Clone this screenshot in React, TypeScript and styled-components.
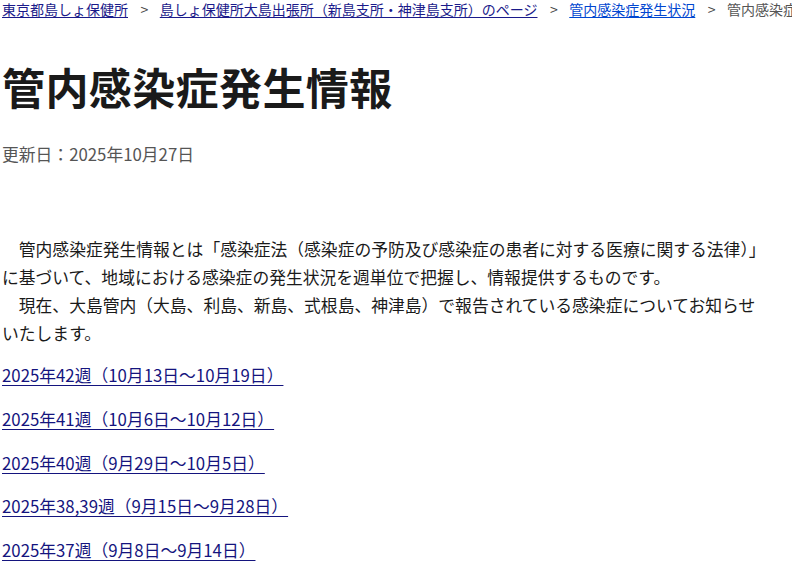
import * as React from 'react'
import styled, { createGlobalStyle } from 'styled-components'

const GlobalStyle = createGlobalStyle`
  html, body {
    margin: 0;
    padding: 0;
    background: #fff;
    overflow: hidden;
  }
  body {
    font-family: "Noto Sans CJK JP", "Noto Sans", sans-serif;
    color: #1a1a1a;
  }
`

const Page = styled.div`
  padding: 0 0 0 2px;
  width: 790px;
`

const Breadcrumb = styled.nav`
  display: flex;
  align-items: center;
  white-space: nowrap;
  font-size: 14px;
  line-height: 18px;
  height: 18px;
  color: #444;
`

const Crumb = styled.a<{ $current?: boolean }>`
  color: ${p => (p.$current ? '#0046d0' : '#1a1a8a')};
  text-decoration: underline;
  text-underline-offset: 2px;
`

const Sep = styled.span`
  display: inline-block;
  margin: 0 11.5px 0 12.5px;
  color: #444;
`

const Here = styled.span`
  color: #555;
`

const Title = styled.h1`
  margin: 37px 0 0 0;
  font-size: 43px;
  line-height: 62px;
  font-weight: 700;
  color: #1a1a1a;
  letter-spacing: 0.4px;
`

const Updated = styled.p`
  margin: 24px 0 0 0;
  font-size: 16.8px;
  line-height: 26px;
  color: #555;
`

const Body = styled.div`
  margin-top: 68px;
  font-size: 16.8px;
  line-height: 28px;
  width: 768px;
`

const Para = styled.p`
  margin: 0;
  text-indent: 1em;
`

const WeekList = styled.div`
  margin-top: 14px;
  display: flex;
  flex-direction: column;
  gap: 15.75px;
`

const WeekLink = styled.a`
  font-size: 16.8px;
  line-height: 28px;
  color: #14147e;
  text-decoration: underline;
  text-underline-offset: 3px;
`

const weeks = [
  '2025年42週（10月13日～10月19日）',
  '2025年41週（10月6日～10月12日）',
  '2025年40週（9月29日～10月5日）',
  '2025年38,39週（9月15日～9月28日）',
  '2025年37週（9月8日～9月14日）',
]

export default function App() {
  return (
    <Page>
      <GlobalStyle />
      <Breadcrumb>
        <Crumb href="#">東京都島しょ保健所</Crumb>
        <Sep>&gt;</Sep>
        <Crumb href="#">島しょ保健所大島出張所（新島支所・神津島支所）のページ</Crumb>
        <Sep>&gt;</Sep>
        <Crumb href="#" $current>管内感染症発生状況</Crumb>
        <Sep>&gt;</Sep>
        <Here>管内感染症発生情報</Here>
      </Breadcrumb>
      <Title>管内感染症発生情報</Title>
      <Updated>更新日：2025年10月27日</Updated>
      <Body>
        <Para>
          管内感染症発生情報とは「感染症法（感染症の予防及び感染症の患者に対する医療に関する法律）」に基づいて、地域における感染症の発生状況を週単位で把握し、情報提供するものです。
        </Para>
        <Para>
          現在、大島管内（大島、利島、新島、式根島、神津島）で報告されている感染症についてお知らせいたします。
        </Para>
      </Body>
      <WeekList>
        {weeks.map(w => (
          <div key={w}>
            <WeekLink href="#">{w}</WeekLink>
          </div>
        ))}
      </WeekList>
    </Page>
  )
}
